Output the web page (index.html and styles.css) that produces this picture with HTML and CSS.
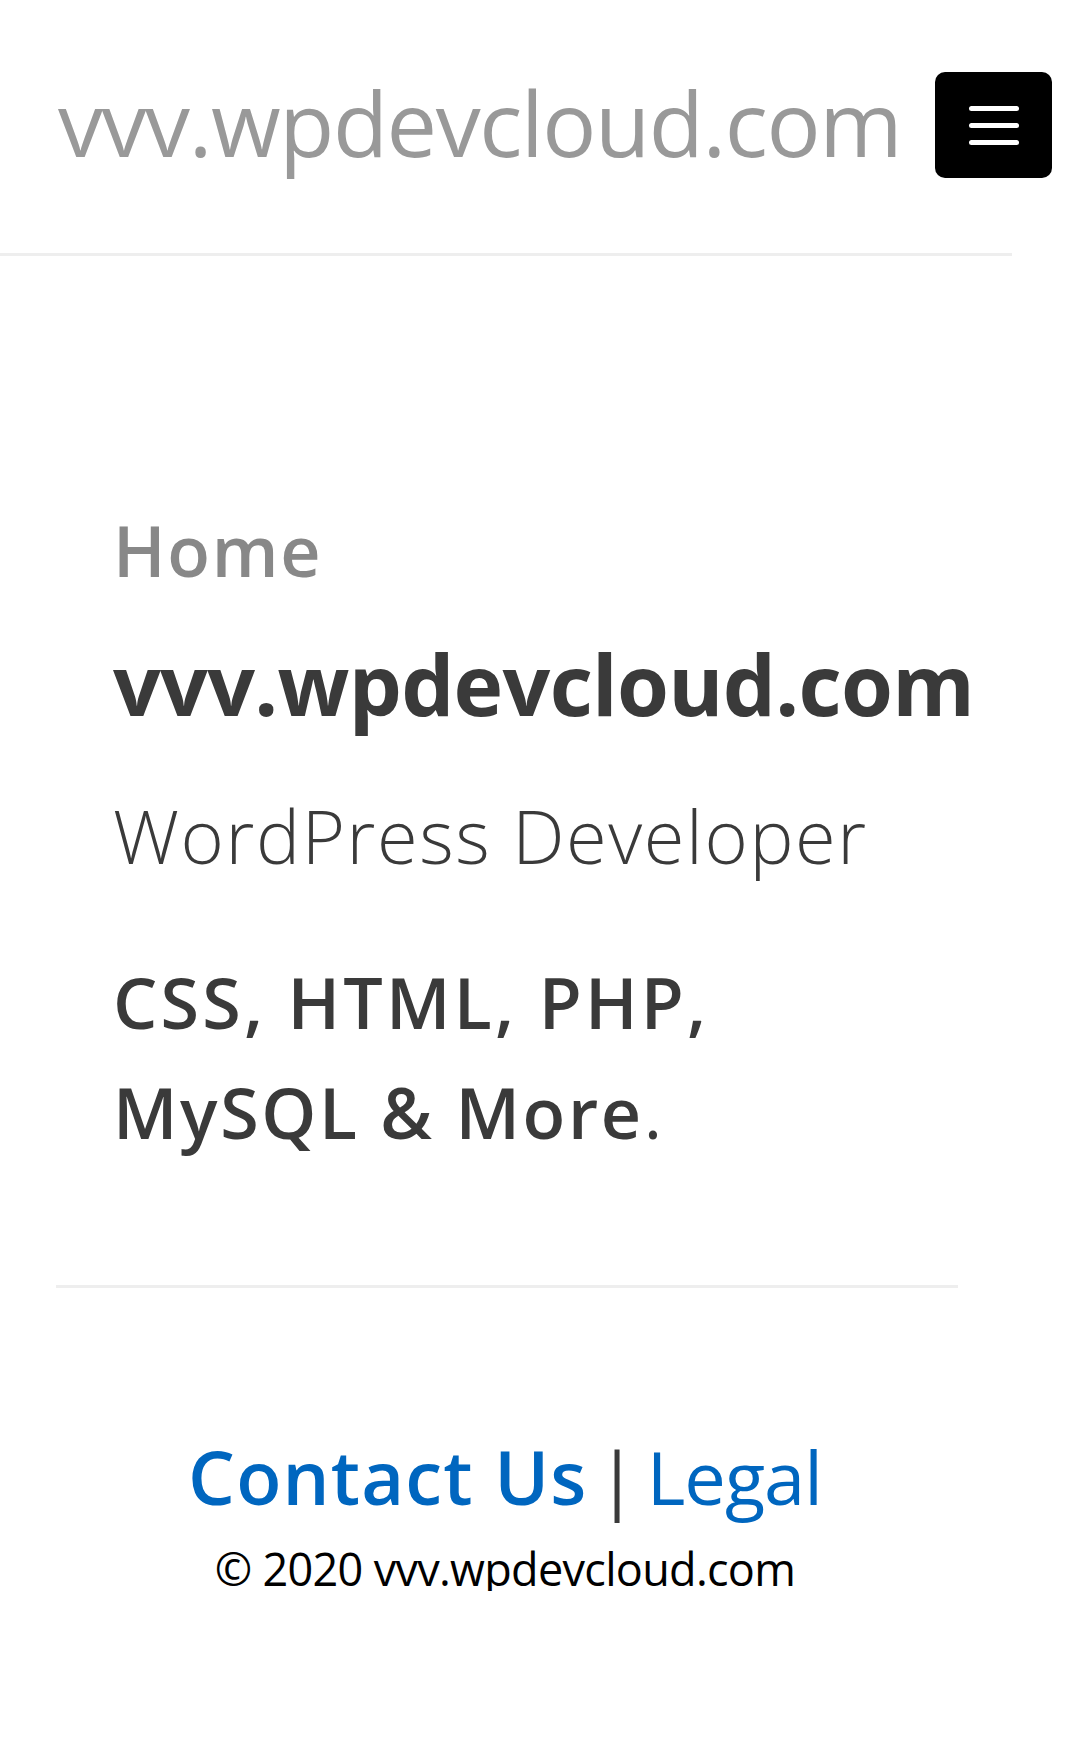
FILE: index.html
```html
<!DOCTYPE html>
<html lang="en">
<head>
<meta charset="utf-8">
<title>vvv.wpdevcloud.com</title>
<link rel="stylesheet" href="styles.css">
</head>
<body>
<div class="page">
  <header class="site-header">
    <a class="logo" href="#">vvv.wpdevcloud.com</a>
    <button class="menu-toggle" aria-label="Menu">
      <span class="bar"></span><span class="bar"></span><span class="bar"></span>
    </button>
  </header>
  <main class="content">
    <h2 class="crumb">Home</h2>
    <h1 class="title">vvv.wpdevcloud.com</h1>
    <p class="subtitle">WordPress Developer</p>
    <p class="skills"><span class="line1">CSS, HTML, PHP,</span><br>MySQL &amp; More<span class="dot">.</span></p>
  </main>
  <hr class="divider">
  <footer class="site-footer">
    <div class="links"><a class="contact" href="#">Contact Us</a> <span class="sep">|</span> <a class="legal" href="#">Legal</a></div>
    <div class="copy">© 2020 vvv.wpdevcloud.com</div>
  </footer>
</div>
</body>
</html>
```
FILE: styles.css
```css
html, body {
  margin: 0;
  padding: 0;
  background: #fff;
}
body {
  font-family: "Open Sans", "DejaVu Sans", sans-serif;
  color: #3a3a3a;
}
.page {
  width: 1010px;
}
.site-header {
  display: flex;
  align-items: flex-start;
  gap: 34px;
  height: 256px;
  border-bottom: 3px solid #eeeeee;
  padding-left: 58px;
  box-sizing: border-box;
  width: 1012px;
}
.logo {
  margin-top: 77px;
  font-size: 90px;
  line-height: 90px;
  letter-spacing: -1.4px;
  color: #999999;
  text-decoration: none;
  white-space: nowrap;
  font-weight: 400;
}
.menu-toggle {
  flex: none;
  margin-top: 72px;
  width: 117px;
  height: 106px;
  background: #000;
  border: none;
  border-radius: 10px;
  display: flex;
  flex-direction: column;
  align-items: center;
  justify-content: center;
  gap: 12px;
  padding: 0;
}
.bar {
  display: block;
  width: 50px;
  height: 5px;
  border-radius: 3px;
  background: #fff;
}
.content {
  padding-left: 113px;
  padding-top: 259px;
}
.crumb {
  margin: 0;
  font-size: 70px;
  line-height: 70px;
  font-weight: 600;
  letter-spacing: 1.7px;
  color: #888888;
}
.title {
  margin: 57px 0 0;
  font-size: 84px;
  line-height: 84px;
  font-weight: 700;
  letter-spacing: -0.7px;
  color: #3a3a3a;
  white-space: nowrap;
}
.subtitle {
  margin: 73px 0 0;
  font-size: 74px;
  line-height: 74px;
  font-weight: 300;
  letter-spacing: 1.6px;
  color: #3a3a3a;
}
.skills {
  margin: 74px 0 0;
  font-size: 70px;
  line-height: 110px;
  font-weight: 600;
  letter-spacing: 2.6px;
  color: #3a3a3a;
}
.skills .line1 {
  letter-spacing: 3.2px;
}
.skills .dot {
  font-weight: 400;
}
.divider {
  margin: 118px 0 0 56px;
  width: 902px;
  height: 3px;
  border: none;
  background: #eeeeee;
}
.site-footer {
  text-align: center;
  padding-top: 152px;
}
.links {
  font-size: 74px;
  line-height: 74px;
  white-space: nowrap;
  word-spacing: -10px;
}
.contact {
  color: #0066bf;
  font-weight: 600;
  letter-spacing: 1.2px;
  word-spacing: 0;
  text-decoration: none;
}
.sep {
  color: #3a3a3a;
}
.legal {
  color: #0066bf;
  font-weight: 400;
  letter-spacing: -1px;
  text-decoration: none;
}
.copy {
  margin-top: 32px;
  font-size: 45px;
  line-height: 45px;
  letter-spacing: -0.7px;
  color: #000;
}
```
